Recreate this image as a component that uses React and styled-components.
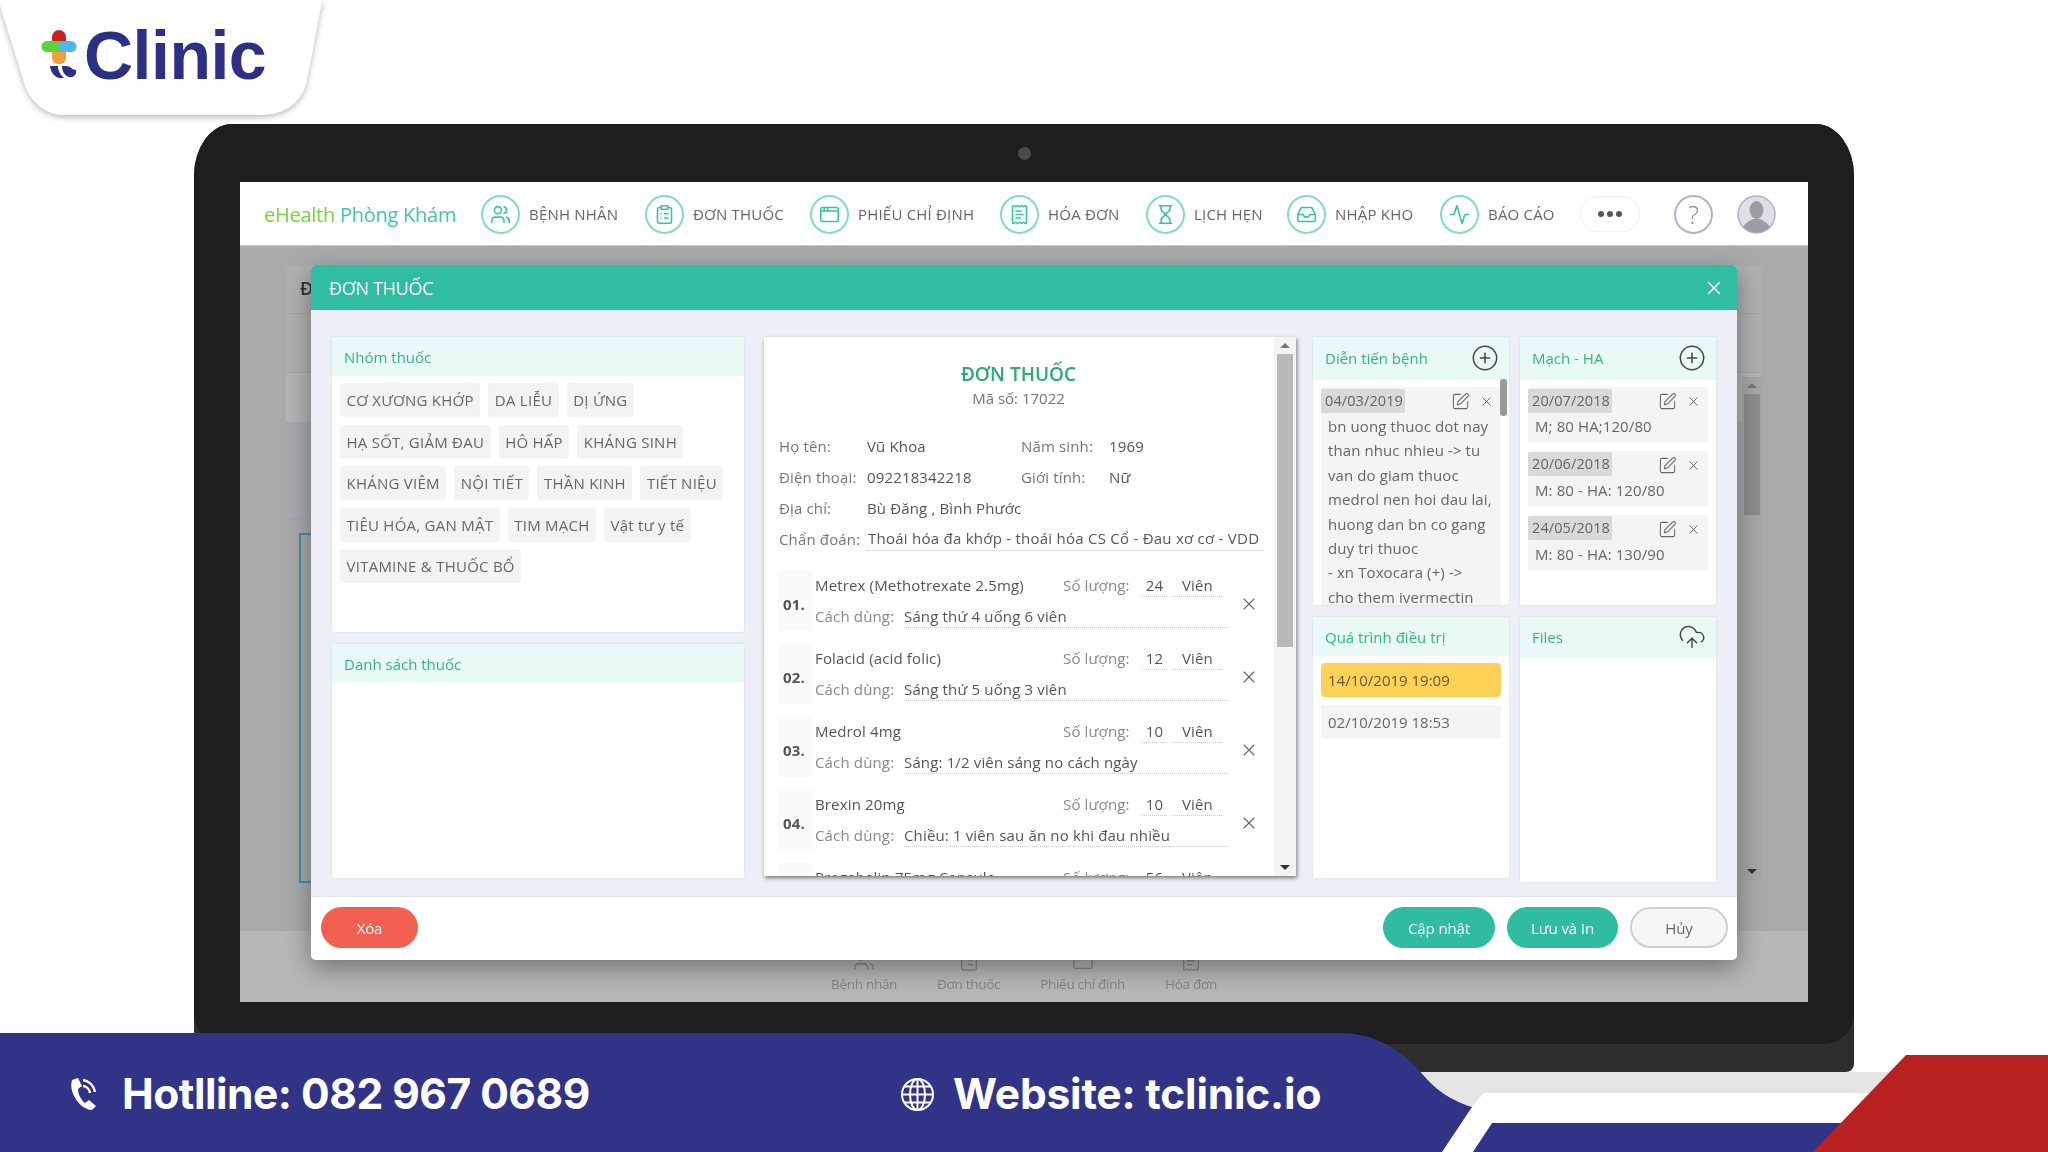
import React from "react";
import styled, { createGlobalStyle } from "styled-components";
import {
  Users, ClipboardList, AppWindow, ReceiptText, Hourglass, Inbox, Activity,
  CirclePlus, SquarePen, X, CloudUpload,
} from "lucide-react";

const GlobalStyle = createGlobalStyle`
  html, body { margin: 0; padding: 0; background: #fff; }
  * { box-sizing: border-box; }
  body { font-family: "Open Sans", "Noto Sans", sans-serif; }
`;

const Page = styled.div`
  position: relative;
  width: 2048px;
  height: 1152px;
  overflow: hidden;
  background: #fff;
  padding: 124px 0 0 194px;
`;

/* ---------- brand tab + banner ---------- */
const LogoTab = styled.div`
  position: absolute;
  left: 0;
  top: 0;
  width: 330px;
  height: 125px;
  z-index: 3;
`;

const LogoShape = styled.svg`
  position: absolute;
  left: 0;
  top: 0;
`;

const LogoMark = styled.svg`
  position: absolute;
  left: 38px;
  top: 26px;
`;

const LogoText = styled.div`
  position: absolute;
  left: 84px;
  top: 16px;
  font: 700 68px/78px "Liberation Sans", Arial, sans-serif;
  letter-spacing: -0.5px;
  color: #2c2f83;
`;

const Decor = styled.svg`
  position: absolute;
  left: 0;
  top: 0;
  z-index: 2;
  pointer-events: none;
`;

const Banner = styled.div`
  position: absolute;
  left: 0;
  bottom: 0;
  width: 1400px;
  height: 119px;
  z-index: 3;
  display: flex;
  align-items: center;
  padding-left: 67px;
  padding-top: 3px;
  color: #fff;
`;

const BannerItem = styled.div`
  display: flex;
  align-items: center;
  gap: ${(p) => p.$gap}px;
  width: ${(p) => p.$width}px;
  font: 700 42.5px/48px Inter, "Noto Sans", sans-serif;
  letter-spacing: ${(p) => p.$spacing}px;
  white-space: nowrap;
`;

/* ---------- laptop ---------- */
const Laptop = styled.div`
  width: 1660px;
  height: 948px;
  background: #2e2e2e;
  border-radius: 38px 38px 8px 8px / 52px 52px 8px 8px;
`;

const Bezel = styled.div`
  height: 920px;
  background: #1e1e1e;
  border-radius: 38px 38px 30px 30px / 52px 52px 30px 30px;
  padding: 0 46px;
`;

const CameraBar = styled.div`
  height: 58px;
  display: flex;
  align-items: center;
  justify-content: center;
`;

const Camera = styled.div`
  width: 13px;
  height: 13px;
  border-radius: 50%;
  background: #4a4a4a;
`;

const Screen = styled.div`
  position: relative;
  width: 1568px;
  height: 820px;
  display: flex;
  flex-direction: column;
  background: #a9aaab;
  filter: blur(0.6px);
`;

const TopNav = styled.div`
  height: 64px;
  flex: none;
  display: flex;
  align-items: center;
  background: #fff;
  padding: 1px 0 0 24px;
  border-bottom: 1px solid #c9c9c9;
`;

const Brand = styled.div`
  width: 217px;
  font-size: 20px;
  letter-spacing: -0.25px;
  color: #3cc7a6;
  white-space: nowrap;
  span { color: #79cf3c; }
`;

const NavItem = styled.div`
  display: flex;
  align-items: center;
  gap: 9px;
  width: ${(p) => p.$width}px;
  font-size: 15px;
  letter-spacing: 0.2px;
  color: #666;
  white-space: nowrap;
`;

const NavCircle = styled.div`
  width: 39px;
  height: 39px;
  flex: none;
  border-radius: 50%;
  border: 2px solid #82dac9;
  color: #38c1a8;
  display: flex;
  align-items: center;
  justify-content: center;
`;

const MorePill = styled.div`
  width: 60px;
  height: 36px;
  margin-left: 5px;
  border-radius: 18px;
  border: 1px solid #f1f1f1;
  display: flex;
  align-items: center;
  justify-content: center;
  gap: 3px;
`;

const Dot = styled.i`
  width: 6px;
  height: 6px;
  border-radius: 50%;
  background: #555;
`;

const HelpCircle = styled.div`
  width: 39px;
  height: 39px;
  margin-left: 34px;
  border-radius: 50%;
  border: 2px solid #b3aed2;
  color: #8a86a8;
  font-size: 25px;
  font-weight: 300;
  display: flex;
  align-items: center;
  justify-content: center;
`;

const Avatar = styled.svg`
  margin-left: 24px;
`;

/* ---------- page behind the dialog ---------- */
const Backdrop = styled.div`
  flex: 1;
  padding: 20px 46px 0;
  display: flex;
`;

const PageCard = styled.div`
  flex: 1;
  display: flex;
  flex-direction: column;
  background: #afb0b1;
`;

const GhostRow = styled.div`
  height: ${(p) => p.$h}px;
  flex: none;
  padding-left: 14px;
  font-size: 18px;
  line-height: 44px;
  font-weight: 600;
  color: #333;
  border-bottom: 1px solid #a5a6a7;
  background: ${(p) => p.$bg || "transparent"};
`;

const GhostBody = styled.div`
  flex: 1;
  display: flex;
  justify-content: space-between;
  align-items: flex-start;
  padding: 13px 0 0 13px;
  background: #aaabac;
`;

const BlueBox = styled.div`
  width: 200px;
  height: 350px;
  border: 2px solid #4a90a8;
`;

const ScrollRail = styled.div`
  width: 20px;
  height: 503px;
  margin-top: -156px;
  display: flex;
  flex-direction: column;
  align-items: center;
  background: #a6a7a8;
  color: #555;
`;

const ScrollThumb = styled.div`
  width: 16px;
  height: 121px;
  margin-bottom: auto;
  background: #8d8d8e;
`;

const Arrow = styled.i`
  width: 0;
  height: 0;
  margin: 6px 0;
  border-left: 5px solid transparent;
  border-right: 5px solid transparent;
  border-bottom: ${(p) => (p.$down ? "0" : "5px solid #777")};
  border-top: ${(p) => (p.$down ? "5px solid #333" : "0")};
`;

const BottomTabs = styled.div`
  height: 71px;
  flex: none;
  display: flex;
  justify-content: center;
  gap: 40px;
  padding-top: 19px;
  background: #b7b7b7;
`;

const BottomTab = styled.div`
  display: flex;
  flex-direction: column;
  align-items: center;
  gap: 3px;
  font-size: 13.5px;
  letter-spacing: -0.3px;
  color: #858585;
`;

/* ---------- dialog ---------- */
const Modal = styled.div`
  position: absolute;
  left: 71px;
  top: 83px;
  width: 1426px;
  height: 695px;
  display: flex;
  flex-direction: column;
  border-radius: 5px;
  overflow: hidden;
  background: #fff;
  box-shadow: 0 8px 26px rgba(0, 0, 0, 0.38);
`;

const ModalHeader = styled.div`
  height: 45px;
  flex: none;
  display: flex;
  align-items: center;
  justify-content: space-between;
  padding: 0 12px 0 18px;
  background: #31bda2;
  color: #fff;
  font-size: 18px;
  letter-spacing: -0.3px;
`;

const ModalBody = styled.div`
  height: 587px;
  flex: none;
  display: grid;
  grid-template-columns: 412px 532px 196px 196px;
  column-gap: 20px;
  padding: 27px 21px 0;
  background: #eceff5;
  border-bottom: 1px solid #e2e5ea;
`;

const Column = styled.div`
  display: flex;
  flex-direction: column;
  gap: 12px;
`;

const RightColumns = styled.div`
  display: grid;
  grid-column: 3 / 5;
  grid-template-columns: 196px 196px;
  column-gap: 11px;
  margin-left: -3px;
`;

const Panel = styled.div`
  position: relative;
  height: ${(p) => p.$h}px;
  flex: none;
  display: flex;
  flex-direction: column;
  overflow: hidden;
  background: #fff;
  border-radius: 2px;
  box-shadow: 0 0 2px rgba(0, 0, 0, 0.12);
`;

const PanelHeader = styled.div`
  height: ${(p) => p.$h || 39}px;
  flex: none;
  display: flex;
  align-items: center;
  justify-content: space-between;
  padding: 0 10px ${(p) => (p.$h ? 2 : 0)}px 12px;
  background: #e9f9f5;
  color: #34b67f;
  font-size: 15px;
  svg { color: #444; }
`;

const Chips = styled.div`
  display: flex;
  flex-wrap: wrap;
  gap: 7.5px 8px;
  padding: 7px 8px;
`;

const Chip = styled.div`
  height: 34px;
  padding: 0 6.5px;
  display: flex;
  align-items: center;
  background: #f3f3f3;
  border-radius: 4px;
  color: #666;
  font-size: 15px;
  letter-spacing: 0.25px;
  white-space: nowrap;
`;

const Prescription = styled.div`
  position: relative;
  width: 532px;
  height: 539px;
  overflow: hidden;
  background: #fff;
  padding: 25px 34px 0 15px;
  box-shadow: 1px 2px 4px rgba(0, 0, 0, 0.5);
`;

const DocTitle = styled.div`
  text-align: center;
  padding-right: 4px;
  font-size: 19px;
  line-height: 24px;
  font-weight: 600;
  color: #27ae6a;
`;

const DocCode = styled.div`
  text-align: center;
  padding-right: 4px;
  margin-top: 1px;
  font-size: 15px;
  line-height: 22px;
  color: #777;
`;

const InfoGrid = styled.div`
  display: grid;
  grid-template-columns: 88px 154px 88px 1fr;
  align-items: center;
  grid-auto-rows: 31px;
  margin-top: 21px;
  font-size: 15px;
  letter-spacing: 0.15px;
  white-space: nowrap;
`;

const Label = styled.div`
  color: #777;
`;

const Value = styled.div`
  color: #555;
  font-weight: 500;
`;

const Diagnosis = styled.div`
  grid-column: 2 / 5;
  margin-right: -1px;
  padding-left: 1px;
  line-height: 24px;
  color: #555;
  letter-spacing: 0.25px;
  border-bottom: 1px dotted #ccc;
`;

const Meds = styled.div`
  display: flex;
  flex-direction: column;
  gap: 13px;
  margin-top: 17px;
`;

const Med = styled.div`
  display: grid;
  grid-template-columns: 35px 1fr 30px;
  height: 60px;
  margin-left: -1px;
  font-size: 15px;
  letter-spacing: 0.15px;
  white-space: nowrap;
`;

const MedNo = styled.div`
  display: flex;
  align-items: center;
  padding: 5px 0 0 5px;
  background: #fafafa;
  color: #555;
  font-weight: 700;
`;

const MedLines = styled.div`
  display: flex;
  flex-direction: column;
  justify-content: space-between;
  padding: 0 0 1px 2px;
`;

const MedLine = styled.div`
  display: flex;
  align-items: center;
  height: 28px;
`;

const MedName = styled.div`
  width: 248px;
  color: #555;
  font-weight: 500;
`;

const QtyLabel = styled.div`
  width: ${(p) => p.$w || 79}px;
  color: #888;
`;

const Underlined = styled.div`
  width: ${(p) => p.$w}px;
  margin-right: ${(p) => p.$mr || 0}px;
  text-align: ${(p) => p.$align || "left"};
  color: #555;
  font-weight: 500;
  line-height: 22px;
  border-bottom: 1px dotted #ccc;
`;

const MedRemove = styled.div`
  display: flex;
  align-items: center;
  justify-content: center;
  padding: 5px 0 0 4px;
  color: #666;
`;

const DocScroll = styled.div`
  position: absolute;
  right: 0;
  top: 0;
  bottom: 0;
  width: 22px;
  display: flex;
  flex-direction: column;
  align-items: center;
  background: #f4f4f4;
`;

const DocThumb = styled.div`
  width: 16px;
  height: 293px;
  margin-bottom: auto;
  background: #b9b9b9;
`;

const EntryList = styled.div`
  display: flex;
  flex-direction: column;
  gap: 7.5px;
  padding: 7px 8px;
`;

const Entry = styled.div`
  background: #f4f4f4;
  border-radius: 4px;
  color: #666;
  font-size: 15px;
  line-height: 24.4px;
  letter-spacing: 0.1px;
  padding-bottom: 5px;
`;

const EntryTop = styled.div`
  display: flex;
  align-items: center;
  padding: 2px 7px 0 0;
  height: 27px;
  color: #666;
`;

const DateTag = styled.div`
  width: 84px;
  height: 24px;
  margin-right: auto;
  margin-bottom: 2px;
  padding-left: 4px;
  background: #d9d9d9;
  border-radius: 2px;
  font-size: 14.5px;
  line-height: 24px;
  color: #666;
`;

const EntryText = styled.div`
  padding: 0 6px 0 7px;
`;

const NoteScroll = styled.div`
  position: absolute;
  right: 2px;
  top: 42px;
  width: 7px;
  height: 37px;
  border-radius: 3px;
  background: #999;
`;

const Visit = styled.div`
  height: 34px;
  display: flex;
  align-items: center;
  padding-left: 7px;
  border-radius: 4px;
  background: ${(p) => (p.$active ? "#ffd257" : "#f4f4f4")};
  color: ${(p) => (p.$active ? "#5f5a3c" : "#666")};
  font-size: 15px;
`;

const ModalFooter = styled.div`
  flex: 1;
  display: flex;
  align-items: center;
  gap: 12px;
  padding: 0 8px 2px 10px;
  background: #fff;
`;

const Pill = styled.div`
  width: ${(p) => p.$w}px;
  height: 41px;
  display: flex;
  align-items: center;
  justify-content: center;
  border-radius: 21px;
  font-size: 15px;
  letter-spacing: -0.1px;
  background: ${(p) => p.$bg};
  color: ${(p) => p.$color || "#fff"};
  border: ${(p) => (p.$outline ? "2px solid #cfcfcf" : "0")};
  margin-right: ${(p) => p.$mr || 0}px;
`;

const navItems = [
  { label: "BỆNH NHÂN", icon: Users, width: 164 },
  { label: "ĐƠN THUỐC", icon: ClipboardList, width: 165 },
  { label: "PHIẾU CHỈ ĐỊNH", icon: AppWindow, width: 190 },
  { label: "HÓA ĐƠN", icon: ReceiptText, width: 146 },
  { label: "LỊCH HẸN", icon: Hourglass, width: 141 },
  { label: "NHẬP KHO", icon: Inbox, width: 153 },
  { label: "BÁO CÁO", icon: Activity, width: 135 },
];

const drugGroups = [
  "CƠ XƯƠNG KHỚP", "DA LIỄU", "DỊ ỨNG", "HẠ SỐT, GIẢM ĐAU", "HÔ HẤP", "KHÁNG SINH",
  "KHÁNG VIÊM", "NỘI TIẾT", "THẦN KINH", "TIẾT NIỆU", "TIÊU HÓA, GAN MẬT", "TIM MẠCH",
  "Vật tư y tế", "VITAMINE & THUỐC BỔ",
];

const meds = [
  { no: "01.", name: "Metrex (Methotrexate 2.5mg)", qty: 24, use: "Sáng thứ 4 uống 6 viên" },
  { no: "02.", name: "Folacid (acid folic)", qty: 12, use: "Sáng thứ 5 uống 3 viên" },
  { no: "03.", name: "Medrol 4mg", qty: 10, use: "Sáng: 1/2 viên sáng no cách ngày" },
  { no: "04.", name: "Brexin 20mg", qty: 10, use: "Chiều: 1 viên sau ăn no khi đau nhiều" },
  { no: "05.", name: "Pregabalin 75mg Capsule", qty: 56, use: "" },
];

const pulses = [
  { date: "20/07/2018", text: "M; 80 HA;120/80" },
  { date: "20/06/2018", text: "M: 80 - HA: 120/80" },
  { date: "24/05/2018", text: "M: 80 - HA: 130/90" },
];

const EntryHead = ({ date }) => (
  <EntryTop>
    <DateTag>{date}</DateTag>
    <SquarePen size={19} strokeWidth={1.3} />
    <X size={15} strokeWidth={1.5} style={{ marginLeft: 9 }} />
  </EntryTop>
);

export default function App() {
  return (
    <Page>
      <GlobalStyle />

      <LogoTab>
        <LogoShape width="330" height="125" viewBox="0 0 330 125">
          <defs>
            <filter id="tabShadow" x="-10%" y="-10%" width="120%" height="125%">
              <feDropShadow dx="0" dy="2" stdDeviation="3" floodColor="#000" floodOpacity="0.3" />
            </filter>
          </defs>
          <path d="M0 0H322L306 84Q296 115 258 115H62Q38 113 26 88L1 8Z" fill="#fff" filter="url(#tabShadow)" />
        </LogoShape>
        <LogoMark width="44" height="56" viewBox="0 0 44 56">
          <rect x="14" y="4" width="14" height="20" rx="7" fill="#c0281f" />
          <rect x="14" y="20" width="14" height="18" rx="6" fill="#f2a03d" />
          <path d="M9 15H21V26H9A5.5 5.5 0 0 1 9 15Z" fill="#5fd13c" />
          <path d="M21 15H33A5.5 5.5 0 0 1 33 26H21Z" fill="#4db7ee" />
          <path d="M12 40H20C20 45 22 48 26 52C19 53 13 49 12 40Z" fill="#2c2f83" />
          <path d="M24 40H28C33 40 34 44 38 44C39 49 35 52 31 51C26 49 24 45 24 40Z" fill="#2c2f83" />
        </LogoMark>
        <LogoText>Clinic</LogoText>
      </LogoTab>

      <Laptop>
        <Bezel>
          <CameraBar>
            <Camera />
          </CameraBar>
          <Screen>
            <TopNav>
              <Brand><span>eHealth</span> Phòng Khám</Brand>
              {navItems.map(({ label, icon: Icon, width }) => (
                <NavItem key={label} $width={width}>
                  <NavCircle><Icon size={21} strokeWidth={1.8} /></NavCircle>
                  {label}
                </NavItem>
              ))}
              <MorePill><Dot /><Dot /><Dot /></MorePill>
              <HelpCircle>?</HelpCircle>
              <Avatar width="39" height="39" viewBox="0 0 39 39">
                <defs>
                  <clipPath id="avatarClip"><circle cx="19.5" cy="19.5" r="18" /></clipPath>
                </defs>
                <circle cx="19.5" cy="19.5" r="18.5" fill="#dfe0e3" stroke="#b3aed2" strokeWidth="1.5" />
                <g clipPath="url(#avatarClip)" fill="#9b9da3">
                  <ellipse cx="19.5" cy="15" rx="7" ry="9" />
                  <path d="M4 39C5 29 11 27 16 24H23C28 27 34 29 35 39Z" />
                </g>
              </Avatar>
            </TopNav>

            <Backdrop>
              <PageCard>
                <GhostRow $h={48}>Đ</GhostRow>
                <GhostRow $h={59} />
                <GhostRow $h={50} $bg="#b3b4b5" />
                <GhostRow $h={97} $bg="#a8abb0" />
                <GhostBody>
                  <BlueBox />
                  <ScrollRail>
                    <Arrow />
                    <ScrollThumb />
                    <Arrow $down />
                  </ScrollRail>
                </GhostBody>
              </PageCard>
            </Backdrop>

            <BottomTabs>
              {[["Bệnh nhân", Users], ["Đơn thuốc", ClipboardList], ["Phiếu chỉ định", AppWindow], ["Hóa đơn", ReceiptText]].map(([label, Icon]) => (
                <BottomTab key={label}>
                  <Icon size={22} strokeWidth={1.4} />
                  {label}
                </BottomTab>
              ))}
            </BottomTabs>

            <Modal>
              <ModalHeader>
                ĐƠN THUỐC
                <X size={22} strokeWidth={1.6} />
              </ModalHeader>

              <ModalBody>
                <Column>
                  <Panel $h={295}>
                    <PanelHeader>Nhóm thuốc</PanelHeader>
                    <Chips>
                      {drugGroups.map((g) => <Chip key={g}>{g}</Chip>)}
                    </Chips>
                  </Panel>
                  <Panel $h={234}>
                    <PanelHeader>Danh sách thuốc</PanelHeader>
                  </Panel>
                </Column>

                <Prescription>
                  <DocTitle>ĐƠN THUỐC</DocTitle>
                  <DocCode>Mã số: 17022</DocCode>
                  <InfoGrid>
                    <Label>Họ tên:</Label><Value>Vũ Khoa</Value>
                    <Label>Năm sinh:</Label><Value>1969</Value>
                    <Label>Điện thoại:</Label><Value>092218342218</Value>
                    <Label>Giới tính:</Label><Value>Nữ</Value>
                    <Label>Địa chỉ:</Label><Value>Bù Đăng , Bình Phước</Value>
                    <div /><div />
                    <Label>Chẩn đoán:</Label>
                    <Diagnosis>Thoái hóa đa khớp - thoái hóa CS Cổ - Đau xơ cơ - VDD</Diagnosis>
                  </InfoGrid>
                  <Meds>
                    {meds.map((m) => (
                      <Med key={m.no}>
                        <MedNo>{m.no}</MedNo>
                        <MedLines>
                          <MedLine>
                            <MedName>{m.name}</MedName>
                            <QtyLabel>Số lượng:</QtyLabel>
                            <Underlined $w={25} $mr={6} $align="center">{m.qty}</Underlined>
                            <Underlined $w={49} $align="center">Viên</Underlined>
                          </MedLine>
                          <MedLine>
                            <QtyLabel $w={89}>Cách dùng:</QtyLabel>
                            <Underlined $w={323}>{m.use}</Underlined>
                          </MedLine>
                        </MedLines>
                        <MedRemove><X size={20} strokeWidth={1.3} /></MedRemove>
                      </Med>
                    ))}
                  </Meds>
                  <DocScroll>
                    <Arrow />
                    <DocThumb />
                    <Arrow $down />
                  </DocScroll>
                </Prescription>

                <RightColumns>
                  <Column>
                    <Panel $h={268}>
                      <PanelHeader $h={43}>
                        Diễn tiến bệnh
                        <CirclePlus size={28} strokeWidth={1.3} />
                      </PanelHeader>
                      <EntryList>
                        <Entry>
                          <EntryHead date="04/03/2019" />
                          <EntryText>
                            bn uong thuoc dot nay<br />
                            than nhuc nhieu -&gt; tu<br />
                            van do giam thuoc<br />
                            medrol nen hoi dau lai,<br />
                            huong dan bn co gang<br />
                            duy tri thuoc<br />
                            - xn Toxocara (+) -&gt;<br />
                            cho them ivermectin
                          </EntryText>
                        </Entry>
                      </EntryList>
                      <NoteScroll />
                    </Panel>
                    <Panel $h={261}>
                      <PanelHeader>Quá trình điều trị</PanelHeader>
                      <EntryList>
                        <Visit $active>14/10/2019 19:09</Visit>
                        <Visit>02/10/2019 18:53</Visit>
                      </EntryList>
                    </Panel>
                  </Column>
                  <Column>
                    <Panel $h={268}>
                      <PanelHeader $h={43}>
                        Mạch - HA
                        <CirclePlus size={28} strokeWidth={1.3} />
                      </PanelHeader>
                      <EntryList>
                        {pulses.map((p) => (
                          <Entry key={p.date}>
                            <EntryHead date={p.date} />
                            <EntryText>{p.text}</EntryText>
                          </Entry>
                        ))}
                      </EntryList>
                    </Panel>
                    <Panel $h={265}>
                      <PanelHeader $h={42}>
                        Files
                        <CloudUpload size={28} strokeWidth={1.2} />
                      </PanelHeader>
                    </Panel>
                  </Column>
                </RightColumns>
              </ModalBody>

              <ModalFooter>
                <Pill $w={97} $bg="#f26052" $mr={953}>Xóa</Pill>
                <Pill $w={112} $bg="#2fbca0">Cập nhật</Pill>
                <Pill $w={111} $bg="#2fbca0">Lưu và In</Pill>
                <Pill $w={98} $bg="#f6f6f6" $color="#666" $outline>Hủy</Pill>
              </ModalFooter>
            </Modal>
          </Screen>
        </Bezel>
      </Laptop>

      <Decor width="2048" height="1152" viewBox="0 0 2048 1152">
        <path d="M1400 1072H1900L1885 1093H1484L1472 1107L1420 1090Z" fill="#e5e5e5" />
        <path d="M1492 1123H1850L1830 1152H1473Z" fill="#313386" />
        <path d="M1906 1055H2048V1152H1813Z" fill="#b92020" />
        <path d="M0 1033H1340C1375 1033 1400 1050 1419 1070C1435 1090 1450 1100 1472 1107L1442 1152H0Z" fill="#313386" />
      </Decor>

      <Banner>
        <BannerItem $gap={21} $width={833} $spacing={-0.5}>
          <svg width="34" height="34" viewBox="0 0 34 34" fill="none">
            <path d="M5 3L11 1L15 9L11 12C11 17 14 23 18 26L22 23L29 29L25 33C14 33 1 16 5 3Z" fill="#fff" />
            <path d="M16 3A14 14 0 0 1 28 15M16 9A8 8 0 0 1 23 16" stroke="#fff" strokeWidth="2.4" />
          </svg>
          Hotlline: 082 967 0689
        </BannerItem>
        <BannerItem $gap={18} $spacing={-0.2}>
          <svg width="35" height="35" viewBox="0 0 35 35" fill="none" stroke="#fff" strokeWidth="2">
            <circle cx="17.5" cy="17.5" r="15.5" />
            <ellipse cx="17.5" cy="17.5" rx="7.5" ry="15.5" />
            <path d="M17.5 2V33M2 17.5H33M4.5 9.5H30.5M4.5 25.5H30.5" />
          </svg>
          Website: tclinic.io
        </BannerItem>
      </Banner>
    </Page>
  );
}
